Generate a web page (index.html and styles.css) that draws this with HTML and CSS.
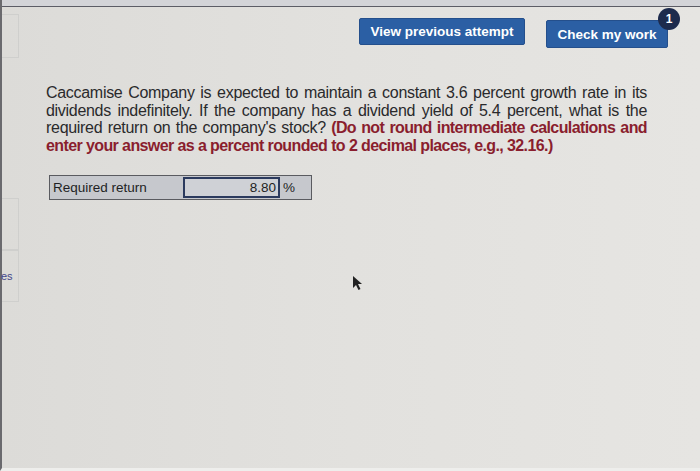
FILE: index.html
```html
<!DOCTYPE html>
<html>
<head>
<meta charset="utf-8">
<link rel="stylesheet" href="styles.css">
</head>
<body>
<div class="screen">
  <div class="topline"></div>
  <div class="side">
    <div class="side-box b1"></div>
    <div class="side-box b2"></div>
    <div class="side-box b3"><span class="side-text">es</span></div>
  </div>
  <div class="main">
    <div class="toolbar">
      <button class="btn btn-prev">View previous attempt</button>
      <div class="check-wrap">
        <button class="btn btn-check">Check my work</button>
        <span class="badge">1</span>
      </div>
    </div>
    <p class="question">Caccamise Company is expected to maintain a constant 3.6 percent growth rate in its dividends indefinitely. If the company has a dividend yield of 5.4 percent, what is the required return on the company's stock? <strong class="hint">(Do not round intermediate calculations and enter your answer as a percent rounded to 2 decimal places, e.g., 32.16.)</strong></p>
    <div class="answer">
      <div class="cell label">Required return</div>
      <div class="cell input">8.80</div>
      <div class="cell unit">%</div>
    </div>
    <div class="pointer-area">
      <svg class="cursor" width="12" height="16" viewBox="0 0 12 16"><path d="M1 1 L1 13 L4 10 L6.5 15 L8.5 14 L6 9 L10 9 Z" fill="#222"/></svg>
    </div>
  </div>
</div>
</body>
</html>
```
FILE: styles.css
```css
html, body { margin: 0; padding: 0; }
body {
  width: 700px; height: 471px; overflow: hidden;
  font-family: "Liberation Sans", Arial, sans-serif;
  background: #d9d8d5;
}
.screen {
  position: relative;
  width: 700px; height: 471px;
  background: linear-gradient(90deg, #dcdbd8 0%, #e2e1de 50%, #e6e5e2 100%);
  border-left: 2px solid #6a6a6e;
  border-bottom: 3px solid #eeeeec;
  box-sizing: border-box;
  display: flex;
}
.topline {
  position: absolute; left: 0; right: 0; top: 0;
  height: 6px;
  background: #d3d4d8;
  border-bottom: 1.5px solid #5c5d66;
}
.side {
  width: 18px; flex: none;
  padding-top: 14px;
  display: flex; flex-direction: column; gap: 0;
}
.side-box {
  border: 1px solid #cfcfcd;
  border-left: none;
  width: 16px;
}
.b1 { height: 42px; margin-bottom: 140px; }
.b2 { height: 50px; }
.b3 { height: 50px; position: relative; }
.side-text {
  position: absolute; left: -1px; top: 19px;
  font-size: 11px; color: #45478a;
}
.main {
  flex: 1;
  padding-top: 18px;
  padding-left: 26px;
}
.toolbar {
  display: flex;
  justify-content: flex-end;
  gap: 21px;
  padding-right: 32px;
  align-items: flex-start;
}
.btn {
  background: #2b5fa4;
  color: #fff;
  border: 1px solid #244f8c;
  border-radius: 2px;
  font-family: "Liberation Sans", Arial, sans-serif;
  font-weight: bold;
  font-size: 13.5px;
  cursor: pointer;
}
.btn-prev { width: 166px; height: 27px; }
.check-wrap { position: relative; margin-top: 2px; }
.btn-check { width: 122px; height: 28px; padding-top: 2px; }
.badge {
  position: absolute;
  right: -12px; top: -12px;
  width: 22px; height: 22px;
  border-radius: 50%;
  background: #1d2b4d;
  color: #fff;
  font-size: 12px; font-weight: bold;
  display: flex; align-items: center; justify-content: center;
}
.question {
  margin: 36px 0 0 0;
  width: 601px;
  font-size: 16px;
  line-height: 17.5px;
  color: #2a2a2c;
  text-align: justify;
  letter-spacing: -0.3px;
}
.hint { color: #8a1e2e; letter-spacing: -0.6px; }
.answer {
  margin-top: 21px;
  margin-left: 3px;
  display: flex;
  width: 263px;
  height: 25px;
  border: 1px solid #5a5b60;
  background: #c6c8cd;
  box-sizing: border-box;
  font-size: 13.5px;
  color: #1e1f24;
}
.cell { display: flex; align-items: center; }
.label { width: 133px; padding-left: 3px; box-sizing: border-box; }
.input {
  width: 97px; justify-content: flex-end; padding-right: 2px;
  box-sizing: border-box;
  border: 2px solid #2b3a5e;
  margin: 1px 0;
  background: #cfd1d6;
}
.unit { padding-left: 3px; }
.pointer-area { padding-left: 306px; padding-top: 75px; }
.cursor { display: block; }
```
